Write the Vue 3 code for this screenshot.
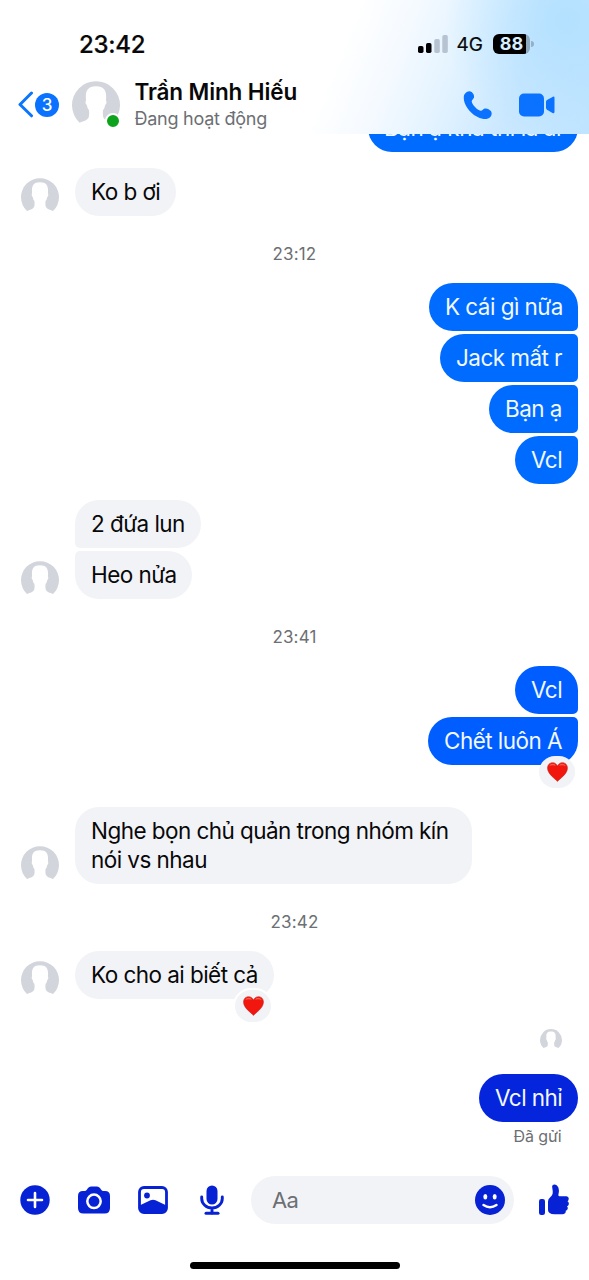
<script setup>
import { h } from 'vue'

const groups = [
  { side: 'out', top: 0, items: [{ text: 'Bạn ạ khả thi là ai', w: 210 }], cut: true },
  { side: 'in', top: 16, items: [{ text: 'Ko b ơi', w: 101 }] },
  { time: '23:12' },
  {
    side: 'out',
    items: [
      { text: 'K cái gì nữa', w: 149 },
      { text: 'Jack mất r', w: 138 },
      { text: 'Bạn ạ', w: 89 },
      { text: 'Vcl', w: 63 },
    ],
  },
  { side: 'in', top: 16, items: [{ text: '2 đứa lun', w: 126 }, { text: 'Heo nửa', w: 117 }] },
  { time: '23:41' },
  { side: 'out', tone: 'mid', items: [{ text: 'Vcl', w: 63 }, { text: 'Chết luôn Á', w: 150, heart: true }] },
  { side: 'in', top: 42, items: [{ text: 'Nghe bọn chủ quản trong nhóm kín nói vs nhau', w: 397, wide: true }] },
  { time: '23:42' },
  { side: 'in', items: [{ text: 'Ko cho ai biết cả', w: 199, heart: true }] },
  { seen: true },
  { side: 'out', tone: 'deep', items: [{ text: 'Vcl nhỉ', w: 99 }] },
]

const Avatar = () =>
  h('svg', { viewBox: '0 0 38 38' }, [
    h('path', {
      fill: '#d2d5db',
      d: 'M6 33A19 19 0 1 1 32 33C28.500 31.700 25.500 31 24.700 28.500C24.300 26.500 24.300 24 24.700 22.800C25.800 21.700 26 20 26.300 19C27.500 18 27.500 16.500 26.900 15.200C27.500 9 26.500 4.200 19 4.200C11.500 4.200 10.500 9 11.100 15.200C10.500 16.500 10.500 18 11.700 19C12 20 12.200 21.700 13.300 22.800C13.700 24 13.700 26.500 13.300 28.500C12.500 31 9.500 31.700 6 33Z',
    }),
  ])

const Heart = () =>
  h('svg', { viewBox: '0 0 20 19' }, [
    h('path', { fill: '#f1160e', stroke: '#c5221a', 'stroke-width': '.5', d: 'M10 18.500C7.500 15.500.5 11.500.5 5.600C.5 2.700 2.600.6 5.300.6C7.600.6 9.200 1.900 10 3.900C10.800 1.900 12.400.6 14.700.6C17.400.6 19.500 2.700 19.500 5.600C19.500 11.500 12.500 15.500 10 18.500Z' }),
    h('path', { fill: '#ff8b78', opacity: '.6', d: 'M2 4Q3 1.700 5.500 1.700Q7.800 1.900 8.500 3.600Q5 2.300 2 4ZM11.500 3.600Q12.300 1.800 14.600 1.700Q17 1.800 18 4Q14.500 2.300 11.500 3.600Z' }),
  ])
</script>

<template>
  <div class="phone">
    <header class="top">
      <div class="status">
        <span class="clock">23:42</span>
        <div class="signals">
          <svg class="bars" viewBox="0 0 30 20">
            <rect x="0" y="12" width="5.500" height="7" rx="1.700" fill="#000" />
            <rect x="8" y="9" width="5.500" height="10" rx="1.700" fill="#000" />
            <rect x="16.300" y="5" width="5.500" height="14" rx="1.700" fill="#b6c3d0" />
            <rect x="24.300" y="1" width="5.500" height="18" rx="1.700" fill="#b6c3d0" />
          </svg>
          <span class="net">4G</span>
          <div class="battery"><span>88</span><i></i></div>
        </div>
      </div>
      <div class="bar">
        <svg class="back" viewBox="0 0 16 27"><path d="M13.500 2L2 13.500L13.500 24.800" fill="none" stroke="#0a75ff" stroke-width="3" stroke-linecap="round" stroke-linejoin="round" /></svg>
        <span class="count">3</span>
        <div class="face"><Avatar class="face-pic" /><i class="online"></i></div>
        <div class="who">
          <strong>Trần Minh Hiếu</strong>
          <span>Đang hoạt động</span>
        </div>
        <svg class="call" viewBox="0 0 30 30"><path fill="#0a72ff" d="M1.700 4.100C3.400 1.600 6.400.3 8.700 2.100C10.300 3.500 11.500 5.500 11 7.600C10.600 9.300 8.600 10 8.700 11.600C9.100 14.900 14.400 20.200 17.500 20.800C19.500 21.100 20 18.900 21.700 18.500C24 18 26.500 19.300 27.900 21.100C30 23.900 27.700 28.800 23.500 29C12.300 29.500.9 17.500.8 8.200C.7 6.500 1 5.200 1.700 4.100Z" /></svg>
        <svg class="video" viewBox="0 0 36 24"><rect x="0" y=".5" width="25" height="23" rx="5" fill="#0a72ff" /><path fill="#0a72ff" d="M27 9Q27 7.800 28 7.100L33.500 3.900Q35.500 3 35.500 5V19Q35.500 20.700 33.500 19.900L28 16.700Q27 16 27 14.800Z" /></svg>
      </div>
    </header>

    <main class="thread">
      <template v-for="(g, i) in groups" :key="i">
        <div v-if="g.time" class="time">{{ g.time }}</div>
        <div v-else-if="g.seen" class="seen"><Avatar class="seen-pic" /></div>
        <section v-else class="group" :class="[g.side, g.tone, { cut: g.cut }]" :style="{ marginTop: (g.top || 0) + 'px' }">
          <Avatar v-if="g.side === 'in'" class="pic" />
          <div class="stack">
            <div v-for="(m, j) in g.items" :key="j" class="bubble" :class="{ wide: m.wide }" :style="{ width: m.w + 'px' }">
              <span class="words">{{ m.text }}</span>
              <span v-if="m.heart" class="react"><Heart class="heart" /></span>
            </div>
          </div>
        </section>
      </template>
      <div class="sent">Đã gửi</div>
    </main>

    <footer class="composer">
      <svg class="plus" viewBox="0 0 30 30"><circle cx="15" cy="15" r="14.700" fill="#0721d4" /><path d="M15 8V22M8 15H22" stroke="#fff" stroke-width="2.600" stroke-linecap="round" /></svg>
      <svg class="camera" viewBox="0 0 32 28"><path fill="#0721d4" d="M5 5H6.500Q8 5 9 3.500L10 2Q11.200.5 13 .5H19Q20.800.5 22 2L23 3.500Q24 5 25.500 5H27Q32 5 32 10V22Q32 27.500 26.500 27.500H5.500Q0 27.500 0 22V10Q0 5 5 5Z" /><circle cx="16" cy="15.300" r="6.700" fill="#0721d4" stroke="#fff" stroke-width="2.500" /></svg>
      <svg class="photo" viewBox="0 0 30 28"><rect x="1.500" y="1.500" width="27" height="25" rx="4.500" fill="#fff" stroke="#0721d4" stroke-width="2.800" /><circle cx="9" cy="9.500" r="2.900" fill="#0721d4" /><path fill="#0721d4" d="M1.500 19.500L12.500 14.300Q15 13.200 17.500 14.300L28.500 19.500V22.500Q28.500 26.500 24.500 26.500H5.500Q1.500 26.500 1.500 22.500Z" /></svg>
      <svg class="mic" viewBox="0 0 24 30"><rect x="6.500" y=".5" width="11" height="19" rx="5.500" fill="#0721d4" /><path d="M1.700 12V13.500A10.300 9.500 0 0 0 22.300 13.500V12M12 23V28" fill="none" stroke="#0721d4" stroke-width="2.900" stroke-linecap="round" /><path d="M6 28.200H18" stroke="#0721d4" stroke-width="3" stroke-linecap="round" /></svg>
      <div class="field">
        <span>Aa</span>
        <svg class="smile" viewBox="0 0 30 30"><circle cx="15" cy="15" r="15" fill="#0721d4" /><ellipse cx="10.300" cy="11.700" rx="2" ry="2.700" fill="#fff" /><ellipse cx="19.700" cy="11.700" rx="2" ry="2.700" fill="#fff" /><path d="M8.500 20Q15 24.500 21.500 20" fill="none" stroke="#fff" stroke-width="2.400" stroke-linecap="round" /></svg>
      </div>
      <svg class="like" viewBox="0 0 30 32"><rect x="0" y="15" width="6" height="16" rx="2.200" fill="#0721d4" /><path fill="#0721d4" d="M9 17.500Q9 15 11 13.500C13.500 11.500 14.200 9.500 13.500 5.500L13.100 2.500Q13.300.5 15.500.6C19 .9 20.800 5 19.500 10Q19 12.200 20.500 12.200H27.500Q30 12.500 29.700 15Q29.500 16.800 28.500 17.200Q30.300 18.500 29.700 20.500Q29.300 22 28 22.300Q29.300 23.700 28.500 25.300Q28 26.500 26.700 26.800Q27.300 29.800 23.500 30.300H15.500Q9 30 9 26Z" /></svg>
    </footer>
    <div class="home"><i></i></div>
  </div>
</template>

<style>
body { background: #fff; }
</style>

<style scoped>
* { box-sizing: border-box; }
svg { display: block; flex: none; }
.phone { width: 589px; height: 1280px; overflow: hidden; display: flex; flex-direction: column; background: #fff; font-family: Inter, "Noto Sans", sans-serif; color: #080809; }
.top { position: relative; z-index: 2; flex: none; height: 134px; background:
  radial-gradient(ellipse 120px 130px at 565px 20px, rgba(174, 223, 255, .8), rgba(174, 223, 255, 0)),
  linear-gradient(112deg, #fff 56%, #f5faff 65%, #e3f3ff 75%, #cbe8ff 86%, #c1e5ff 100%); }
.status { height: 70px; padding: 18px 55px 0 79px; display: flex; align-items: center; justify-content: space-between; }
.clock { font-size: 24px; font-weight: 500; letter-spacing: -.25px; -webkit-text-stroke: .2px currentColor; }
.signals { display: flex; align-items: center; }
.bars { width: 30px; height: 20px; margin-right: 8.500px; }
.net { font-size: 19px; font-weight: 400; letter-spacing: 0; -webkit-text-stroke: .2px currentColor; width: 28px; margin-right: 8.500px; }
.battery { display: flex; align-items: center; }
.battery span { width: 37px; height: 20px; border-radius: 6px; font-size: 18px; line-height: 20px; font-weight: 700; text-align: center; color: #d9efff; background: linear-gradient(90deg, #000 33.500px, #8fa9bd 33.500px); }
.battery i { width: 3px; height: 6px; margin-left: 1px; border-radius: 0 3px 3px 0; background: #93b0c5; }
.bar { height: 64px; padding: 0 34px 0 18px; display: flex; align-items: center; }
.back { width: 16px; height: 27px; margin-top: 5px; }
.count { width: 24px; height: 24px; margin: 5px 13px 0 1px; border-radius: 50%; background: #0a72ff; color: #fff; font-size: 17px; line-height: 24px; font-weight: 500; text-align: center; }
.face { position: relative; width: 48px; height: 48px; margin-top: 5px; flex: none; }
.face-pic { width: 48px; height: 48px; }
.online { position: absolute; left: 33px; top: 32px; width: 16px; height: 16px; border: 2px solid #fff; border-radius: 50%; background: #0da31d; }
.who { display: flex; flex-direction: column; flex: 1; margin: 4px 0 0 14.500px; white-space: nowrap; }
.who strong { font-size: 22.500px; line-height: 28px; font-weight: 600; letter-spacing: -.12px; }
.who span { font-size: 18px; line-height: 25px; letter-spacing: -.25px; color: #6c6f73; }
.call { width: 30px; height: 30px; margin: 6px 26px 0 0; }
.video { width: 36px; height: 24px; margin-top: 5px; }
.thread { flex: none; height: 1030px; }
.group { display: flex; align-items: flex-end; padding: 0 11px 0 21px; }
.group.cut { height: 18px; }
.stack { display: flex; flex-direction: column; gap: 3px; }
.in .stack { margin-left: 16px; }
.out .stack { flex: 1; align-items: flex-end; }
.pic { width: 38px; height: 38px; }
.bubble { position: relative; height: 48px; padding: 9px 0 0 16px; border-radius: 24px; font-size: 22.500px; line-height: 30px; letter-spacing: -.55px; white-space: nowrap; background: #f2f3f7; }
.out .bubble { color: #f2f8ff; background: #006bff; }
.out.mid .bubble { background: #005dff; }
.out.deep .bubble { background: #0525dc; }
.in .bubble:not(:last-child) { border-bottom-left-radius: 5px; }
.in .bubble:not(:first-child) { border-top-left-radius: 5px; }
.out .bubble:not(:last-child) { border-bottom-right-radius: 5px; }
.out .bubble:not(:first-child) { border-top-right-radius: 5px; }
.bubble.wide { height: 77px; padding-right: 14px; white-space: normal; line-height: 29px; }
.cut .bubble { letter-spacing: -.45px; }
.react { position: absolute; right: 1px; bottom: -25px; width: 40px; height: 36px; border-radius: 18px; border: 2px solid #fff; background: #f2f3f7; display: flex; align-items: center; justify-content: center; }
.out .react { border-color: transparent; background-clip: padding-box; }
.heart { width: 21px; height: 20px; }
.time { height: 67px; padding-top: 27.500px; font-size: 17px; line-height: 21px; letter-spacing: .15px; text-align: center; color: #6c6f73; }
.seen { height: 75px; padding: 30px 27px 0 0; display: flex; justify-content: flex-end; }
.seen-pic { width: 22px; height: 22px; }
.sent { padding: 4px 27.500px 0 0; text-align: right; font-size: 16px; line-height: 21px; color: #6c6f73; letter-spacing: -.1px; }
.composer { flex: none; height: 72px; padding: 0 20px; display: flex; align-items: center; }
.plus { width: 30px; height: 30px; margin-right: 27.500px; }
.camera { width: 32px; height: 28px; margin-right: 28px; }
.photo { width: 30px; height: 28px; margin-right: 32px; }
.mic { width: 24px; height: 30px; margin-right: 27.500px; }
.field { width: 263px; height: 48px; padding: 0 9px 0 21px; border-radius: 24px; background: #f2f3f7; display: flex; align-items: center; justify-content: space-between; font-size: 22px; letter-spacing: -.6px; color: #6c6f73; }
.smile { width: 30px; height: 30px; }
.like { width: 30px; height: 32px; margin-left: 25px; }
.home { height: 44px; padding-top: 26px; }
.home i { display: block; width: 210px; height: 7px; margin: 0 auto; border-radius: 4px; background: #000; }
</style>
